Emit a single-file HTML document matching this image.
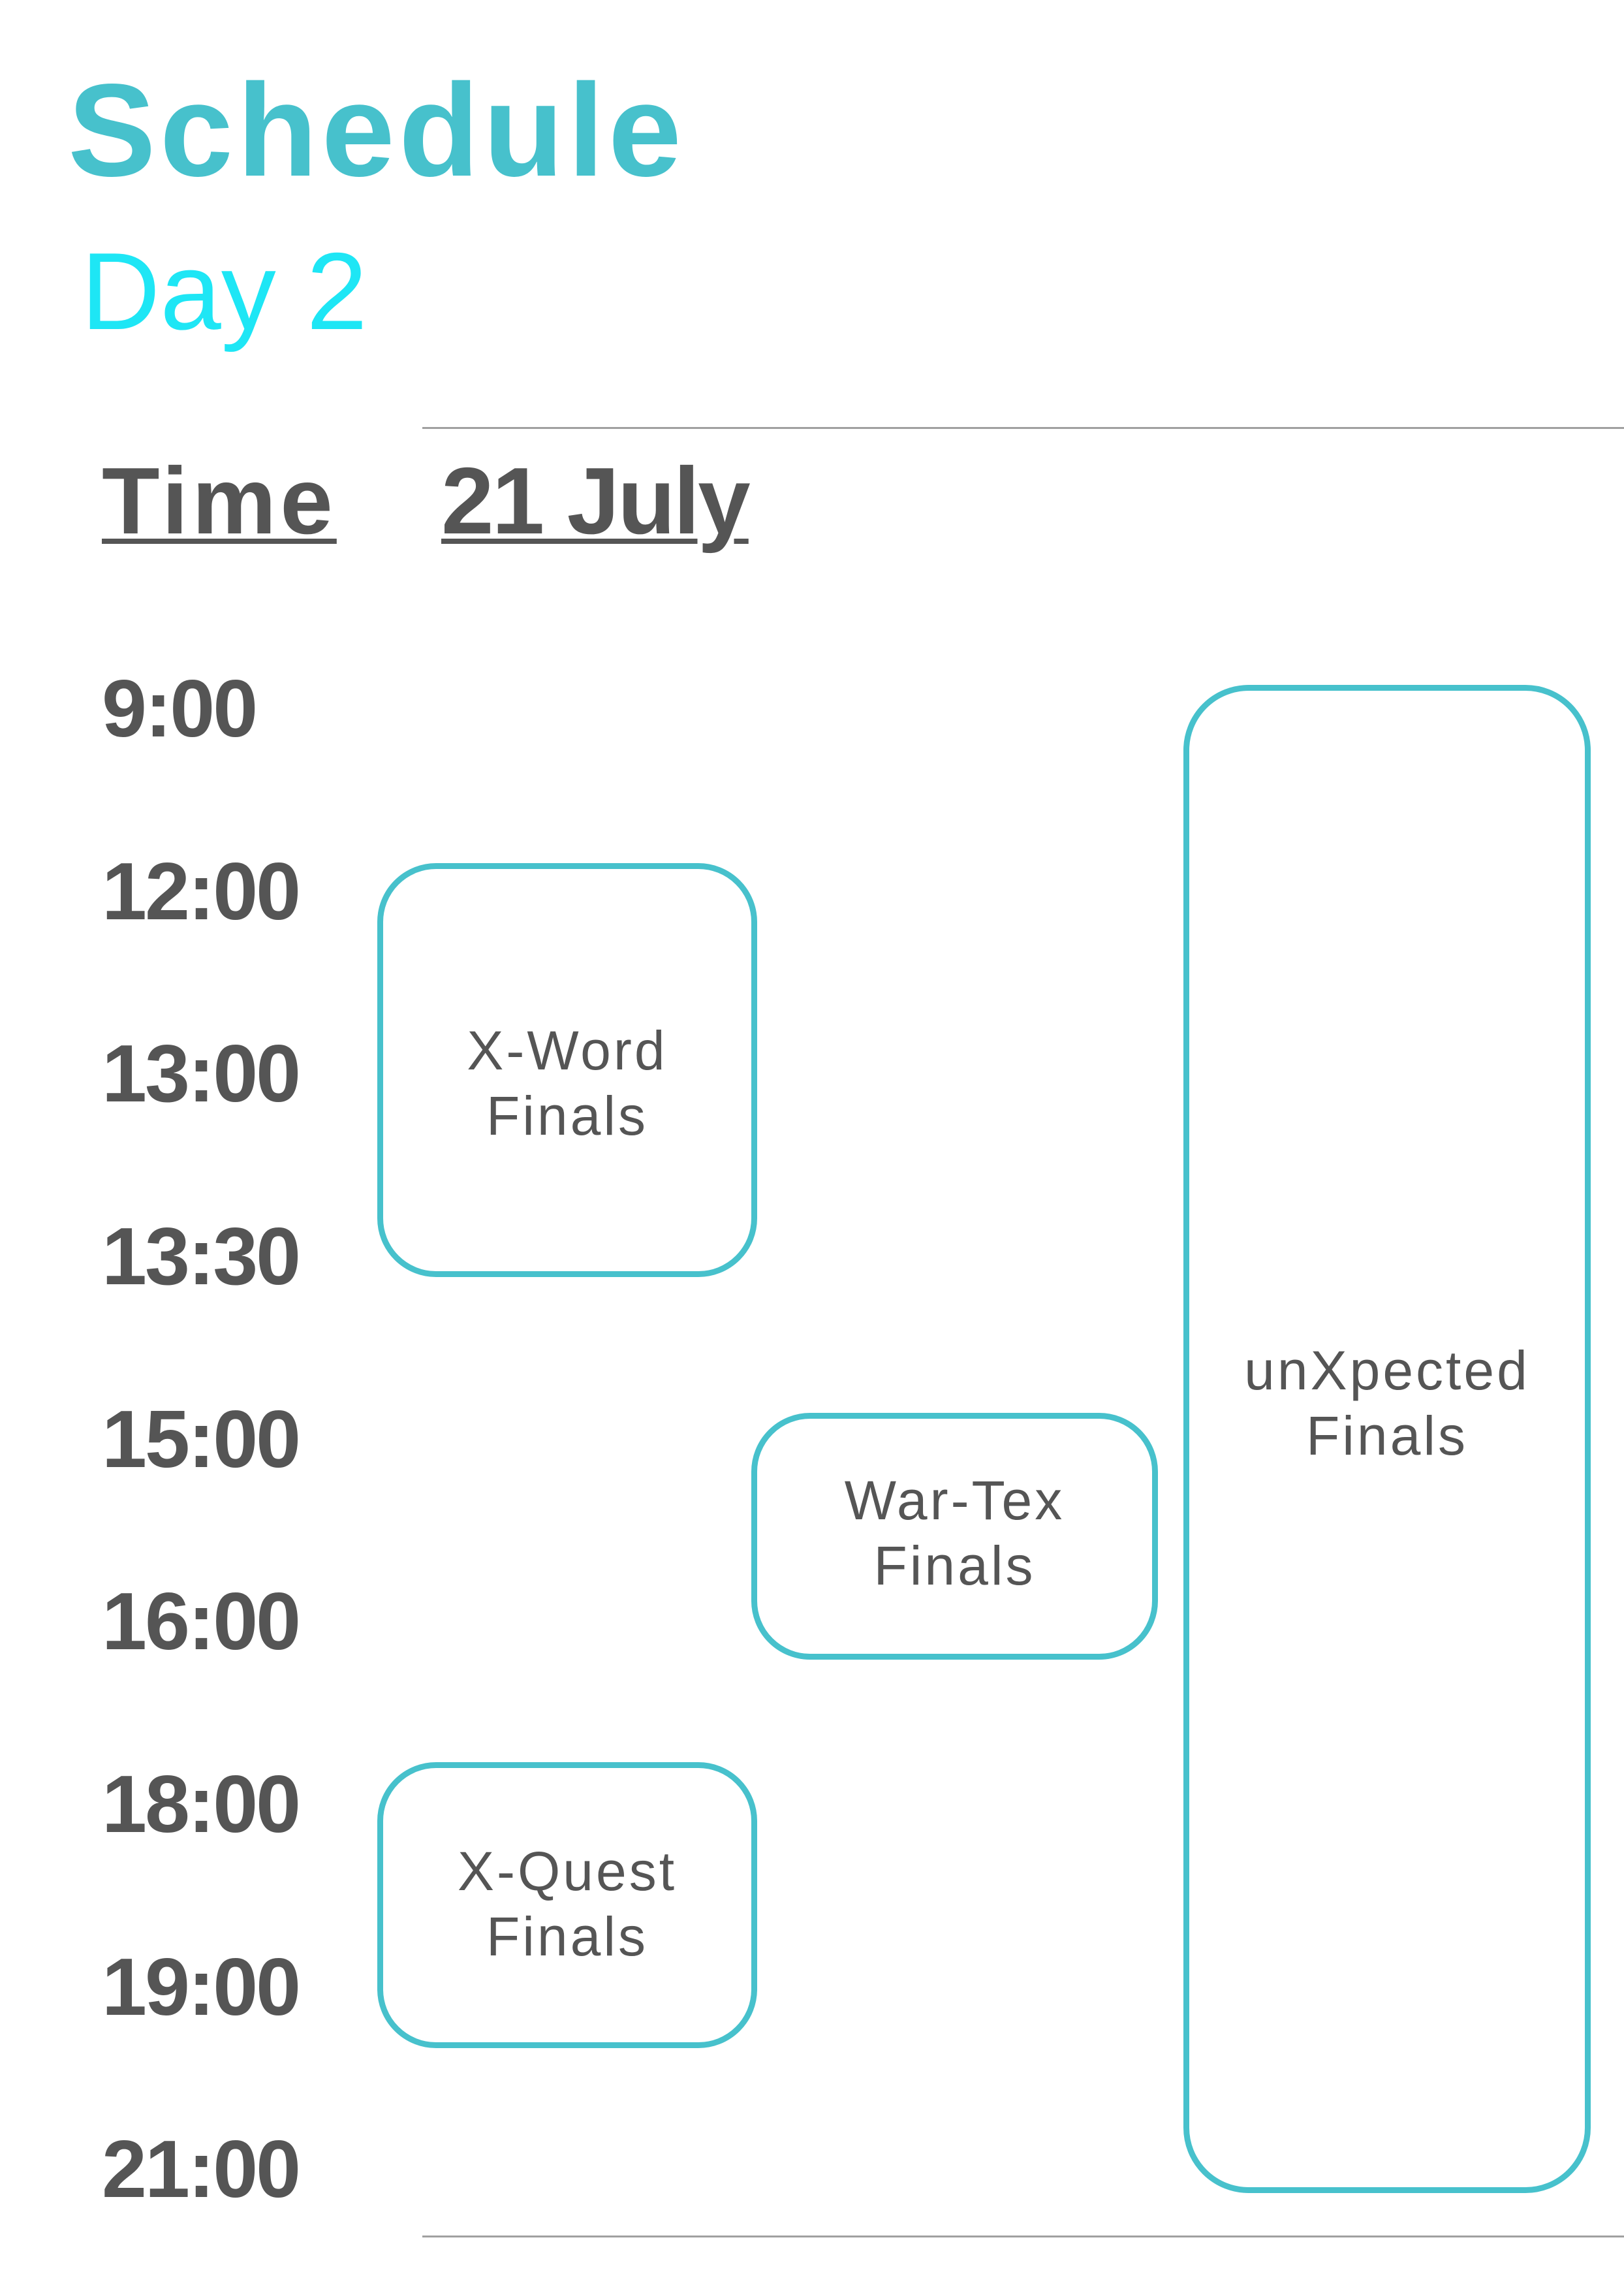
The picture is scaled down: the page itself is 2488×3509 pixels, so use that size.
<!DOCTYPE html>
<html><head><meta charset="utf-8"><style>
html,body{margin:0;padding:0;background:#fff;}
body{width:2488px;height:3509px;position:relative;overflow:hidden;font-family:"Liberation Sans",sans-serif;}
.a{position:absolute;white-space:nowrap;}
.t{color:#555;font-weight:bold;font-size:124px;left:156px;line-height:1;letter-spacing:-3px;}
.box{position:absolute;border:9px solid #47c1cc;border-radius:90px;box-sizing:border-box;display:flex;align-items:center;justify-content:center;text-align:center;color:#555;font-size:84px;line-height:100px;letter-spacing:4px;}
.box div{margin-top:40px;}
.line{position:absolute;left:647px;right:0;height:3px;background:#a0a0a0;}
</style></head><body>
<div class="a" style="left:104px;top:98px;font-size:202px;font-weight:bold;color:#47c1cc;line-height:1;letter-spacing:6px;">Schedule</div>
<div class="a" style="left:124px;top:362px;font-size:168px;color:#1ee6f5;line-height:1;">Day 2</div>
<div class="line" style="top:654px;"></div>
<div class="a" style="left:156px;top:695px;font-size:145px;font-weight:bold;color:#555;text-decoration:underline;text-decoration-thickness:8px;text-underline-offset:8px;line-height:1;letter-spacing:6px;">Time</div>
<div class="a" style="left:676px;top:695px;font-size:145px;font-weight:bold;color:#555;text-decoration:underline;text-decoration-thickness:8px;text-underline-offset:8px;line-height:1;letter-spacing:-3px;">21 July</div>
<div class="a t" style="top:1024px;">9:00</div>
<div class="a t" style="top:1304px;">12:00</div>
<div class="a t" style="top:1583px;">13:00</div>
<div class="a t" style="top:1863px;">13:30</div>
<div class="a t" style="top:2143px;">15:00</div>
<div class="a t" style="top:2422px;">16:00</div>
<div class="a t" style="top:2702px;">18:00</div>
<div class="a t" style="top:2982px;">19:00</div>
<div class="a t" style="top:3261px;">21:00</div>
<div class="box" style="left:578px;top:1322px;width:582px;height:634px;"><div>X-Word<br>Finals</div></div>
<div class="box" style="left:1151px;top:2164px;width:623px;height:378px;"><div style="margin-top:-10px">War-Tex<br>Finals</div></div>
<div class="box" style="left:578px;top:2699px;width:582px;height:438px;"><div style="margin-top:-5px">X-Quest<br>Finals</div></div>
<div class="box" style="left:1813px;top:1049px;width:624px;height:2310px;border-radius:100px;"><div style="margin-top:-110px">unXpected<br>Finals</div></div>
<div class="line" style="top:3424px;"></div>
</body></html>
